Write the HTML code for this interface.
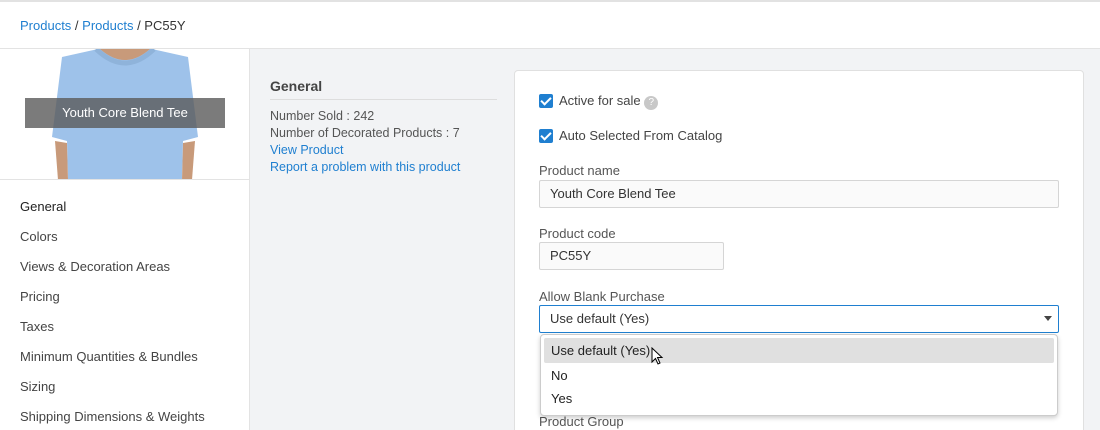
<!DOCTYPE html>
<html style="width:1100px;height:430px;overflow:hidden"><head><style>
*{box-sizing:border-box;margin:0;padding:0}
body{width:1100px;height:430px;overflow:hidden;background:#f2f3f5;font-family:"Liberation Sans",sans-serif;font-size:13px;color:#333;position:relative}
.hdr{position:absolute;left:0;top:0;width:1100px;height:49px;background:#fff;border-top:2px solid #e2e2e2;border-bottom:1px solid #e3e3e3}
.hdr div{position:absolute;left:20px;top:16px;font-size:13px;color:#333}
a{color:#1f7fd0;text-decoration:none}
.side{position:absolute;left:0;top:49px;width:250px;height:381px;background:#fff;border-right:1px solid #e3e3e3}
.img{position:absolute;left:0;top:0;width:249px;height:131px;border-bottom:1px solid #e3e3e3;overflow:hidden}
.lbl{position:absolute;left:25px;top:49px;width:200px;height:30px;background:rgba(90,90,90,.8);color:#fff;text-align:center;line-height:30px;font-size:13px}
.menu{position:absolute;left:20px;top:150px}
.menu div{height:30px;font-size:13px;color:#444}
.mid{position:absolute;left:270px;top:78px;width:227px}
.mid h3{font-size:14px;font-weight:bold;color:#444;padding-bottom:5px;border-bottom:1px solid #ddd;margin-bottom:8px}
.mid p{font-size:12.5px;line-height:17px;color:#555}
.card{position:absolute;left:514px;top:70px;width:570px;height:380px;background:#fff;border:1px solid #e0e0e0;border-radius:4px}
.f{position:absolute;left:24px;font-size:13px;color:#555}
.cb{position:absolute;left:24px;width:14px;height:14px;background:#1f7fd0;border-radius:2px}
.cb:after{content:"";position:absolute;left:4px;top:1px;width:4px;height:8px;border:solid #fff;border-width:0 2px 2px 0;transform:rotate(45deg)}
.in{position:absolute;left:24px;height:28px;border:1px solid #d5d5d5;border-radius:2px;background:#fafafa;padding:0 10px;line-height:26px;color:#333}
.dd{position:absolute;left:540px;top:334px;width:518px;height:82px;background:#fff;border:1px solid #ccc;border-radius:4px;box-shadow:0 2px 5px rgba(0,0,0,.2)}
.dd div{position:absolute;left:10px;font-size:13px;color:#222}
</style></head><body>
<div class="hdr"><div><a>Products</a> / <a>Products</a> / PC55Y</div></div>
<div class="side">
 <div class="img">
  <svg width="249" height="131" style="position:absolute;left:0;top:0">
   <path d="M62 8 L98 0 L152 0 L188 8 L198 88 L183 92 L182 131 L68 131 L67 92 L52 88 Z" fill="#9ec2ea"/>
   <path d="M96 0 Q125 28 154 0" fill="none" stroke="#8fb3da" stroke-width="5"/>
   <path d="M100 0 Q125 22 150 0 Z" fill="#c89a7a"/>
   <path d="M55 92 L67 94 L68 131 L58 131 Z" fill="#c89a7a"/>
   <path d="M183 94 L195 92 L192 131 L182 131 Z" fill="#c89a7a"/>
  </svg>
  <div class="lbl">Youth Core Blend Tee</div>
 </div>
 <div class="menu">
  <div style="color:#222">General</div><div>Colors</div><div>Views &amp; Decoration Areas</div><div>Pricing</div><div>Taxes</div><div>Minimum Quantities &amp; Bundles</div><div>Sizing</div><div>Shipping Dimensions &amp; Weights</div>
 </div>
</div>
<div class="mid"><h3>General</h3>
<p>Number Sold : 242</p><p>Number of Decorated Products : 7</p><p><a>View Product</a></p><p><a>Report a problem with this product</a></p></div>
<div class="card">
 <div class="cb" style="top:23px"></div><div class="f" style="left:44px;top:22px;color:#444">Active for sale <span style="display:inline-block;width:14px;height:14px;border-radius:50%;background:#c8c8c8;color:#fff;font-size:10px;text-align:center;line-height:14px;vertical-align:0">?</span></div>
 <div class="cb" style="top:58px"></div><div class="f" style="left:44px;top:57px;color:#444">Auto Selected From Catalog</div>
 <div class="f" style="top:92px">Product name</div>
 <div class="in" style="top:109px;width:520px">Youth Core Blend Tee</div>
 <div class="f" style="top:155px">Product code</div>
 <div class="in" style="top:171px;width:185px">PC55Y</div>
 <div class="f" style="top:218px">Allow Blank Purchase</div>
 <div class="in" style="top:234px;width:520px;background:#fff;border-color:#1f7fd0">Use default (Yes)<span style="position:absolute;right:6px;top:10px;border:4px solid transparent;border-top:5px solid #444"></span></div>
 <div class="f" style="top:343px">Product Group</div>
</div>
<div class="dd">
 <div style="left:3px;right:3px;top:3px;height:25px;background:#e0e0e0;border-radius:2px"></div>
 <div style="top:8px">Use default (Yes)</div>
 <div style="top:33px">No</div>
 <div style="top:56px">Yes</div>
 <svg style="position:absolute;left:110px;top:12px" width="14" height="20"><path d="M1 1 L1 15 L4.5 11.5 L7 17 L9 16 L6.5 10.5 L11 10.5 Z" fill="#fff" stroke="#000" stroke-width="1"/></svg>
</div>
</body></html>
